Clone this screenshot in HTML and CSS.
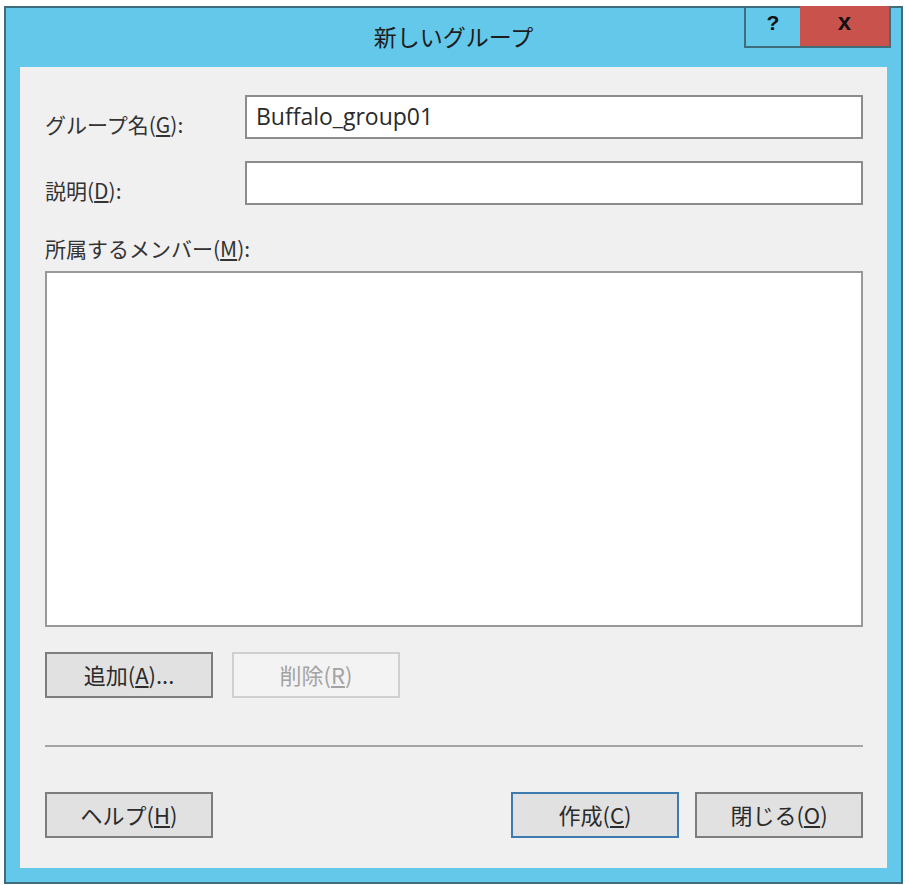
FILE: index.html
```html
<!DOCTYPE html>
<html lang="ja">
<head>
  <meta charset="UTF-8">
  <title>新しいグループ</title>
  <link rel="stylesheet" href="styles.css">
</head>
<body>
  <div class="window">
    <div class="titlebar">
      <div class="title">新しいグループ</div>
      <div class="caption-buttons">
        <div class="cap-btn help">?</div>
        <div class="cap-btn close">x</div>
      </div>
    </div>

    <div class="content">
      <!-- 名前と説明 -->
      <div class="form-grid">
        <label class="label row-label" for="group-name">グループ名(<u>G</u>):</label>
        <input class="field" id="group-name" type="text" value="Buffalo_group01">
        <label class="label row-label" for="group-desc">説明(<u>D</u>):</label>
        <input class="field" id="group-desc" type="text" value="">
      </div>

      <!-- メンバー一覧 -->
      <div class="label members-label">所属するメンバー(<u>M</u>):</div>
      <div class="listbox"></div>

      <div class="button-row">
        <button class="btn">追加(<u>A</u>)...</button>
        <button class="btn disabled" disabled>削除(<u>R</u>)</button>
      </div>

      <hr class="separator">

      <div class="footer">
        <button class="btn">ヘルプ(<u>H</u>)</button>
        <div class="footer-right">
          <button class="btn default">作成(<u>C</u>)</button>
          <button class="btn">閉じる(<u>O</u>)</button>
        </div>
      </div>
    </div>
  </div>
</body>
</html>
```

FILE: styles.css
```css
html, body {
  margin: 0;
  padding: 0;
  background: #ffffff;
  font-family: "Noto Sans CJK JP", "Noto Sans", sans-serif;
  color: #2b2b2b;
}

/* ウィンドウ枠 */
.window {
  box-sizing: border-box;
  width: 899px;
  height: 878px;
  margin: 6px 0 0 4px;
  background: #63c8ea;
  border: 2px solid #3f6d7b;
  display: flex;
  flex-direction: column;
}

.titlebar {
  height: 59px;
  display: flex;
  justify-content: center;
  align-items: center;
  position: relative;
}
.title {
  font-size: 23px;
  color: #1d1d1d;
  margin-top: -4px;
}
.caption-buttons {
  position: absolute;
  top: -2px;
  right: 10px;
  display: flex;
}
.cap-btn {
  box-sizing: border-box;
  height: 42px;
  display: flex;
  align-items: center;
  justify-content: center;
  font-family: "Liberation Sans", Arial, sans-serif;
  font-weight: bold;
  font-size: 21px;
  color: #111;
  border-bottom: 2px solid #3f6d7b;
}
.cap-btn.help {
  width: 56px;
  border-left: 2px solid #3f6d7b;
  padding-bottom: 6px;
}
.cap-btn.close {
  width: 91px;
  background: #c9534c;
  border-right: 2px solid #3f6d7b;
  font-size: 24px;
  padding-bottom: 8px;
}

/* 本体 */
.content {
  flex: 1;
  margin: 0 14px 14px 14px;
  background: #f0f0f0;
  padding: 28px 24px 29px 25px;
  display: flex;
  flex-direction: column;
}

.form-grid {
  display: grid;
  grid-template-columns: 200px 1fr;
  row-gap: 22px;
  align-items: center;
}
.label {
  font-size: 21px;
  color: #333;
  line-height: 28px;
}
.row-label {
  padding-top: 14px;
}
.label u, .btn u {
  text-underline-offset: 2px;
}
.field {
  box-sizing: border-box;
  height: 44px;
  width: 100%;
  margin: 0;
  border: 2px solid #8c8c8c;
  background: #fff;
  padding: 0 9px 3px;
  font-family: "Open Sans", "Noto Sans", sans-serif;
  font-size: 23px;
  color: #2a2a2a;
  outline: none;
}

.members-label {
  margin-top: 29px;
}
.listbox {
  box-sizing: border-box;
  height: 356px;
  margin-top: 9px;
  background: #fff;
  border: 2px solid #999;
}

.button-row {
  display: flex;
  gap: 19px;
  margin-top: 25px;
}

.btn {
  box-sizing: border-box;
  width: 168px;
  height: 46px;
  margin: 0;
  padding: 0 0 3px;
  background: #e1e1e1;
  border: 2px solid #7d7d7d;
  font-family: "Noto Sans CJK JP", "Noto Sans", sans-serif;
  font-size: 22px;
  color: #2b2b2b;
}
.btn.disabled {
  background: #f3f3f3;
  border-color: #cfcfcf;
  color: #a3a3a3;
}
.btn.default {
  border-color: #3d7bb0;
}

.separator {
  margin: 47px 0 0;
  border: none;
  border-top: 2px solid #a5a5a5;
}

.footer {
  display: flex;
  justify-content: space-between;
  margin-top: 45px;
}
.footer-right {
  display: flex;
  gap: 16px;
}
```
